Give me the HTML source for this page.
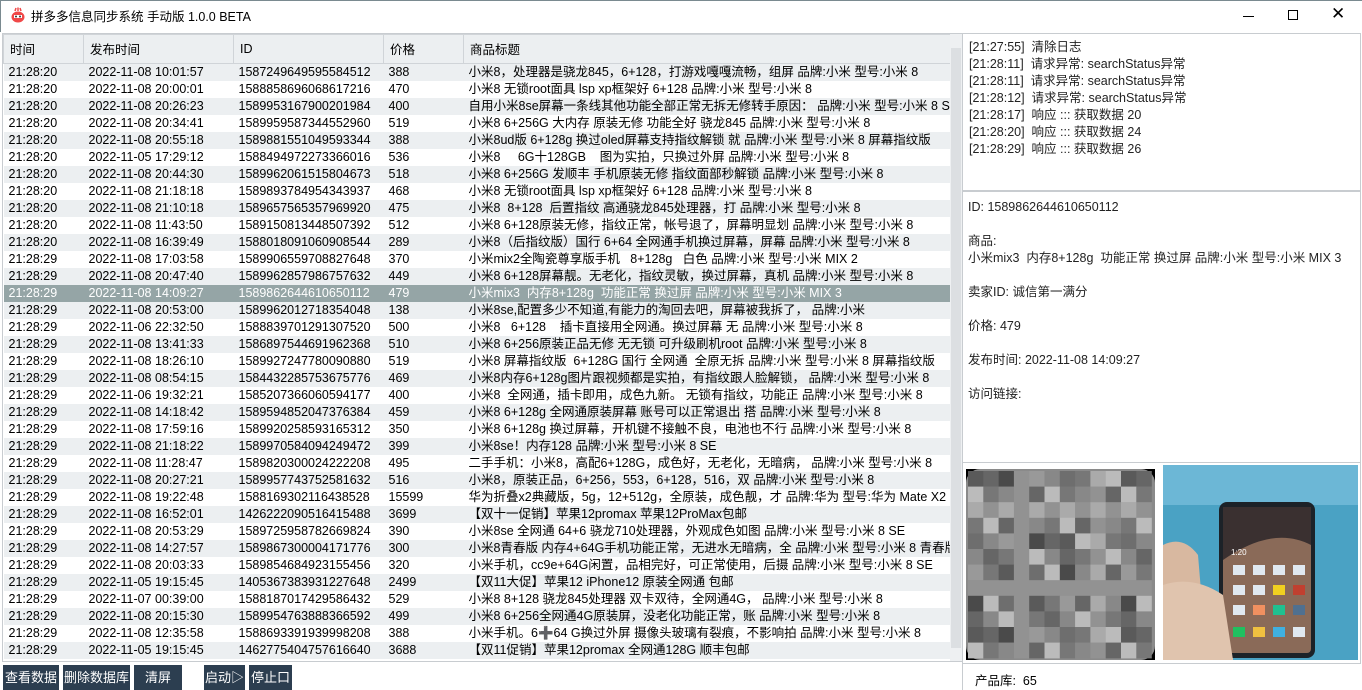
<!DOCTYPE html>
<html><head><meta charset="utf-8">
<style>
*{margin:0;padding:0;box-sizing:border-box}
body{width:1362px;height:690px;overflow:hidden;background:#fff;font-family:"Liberation Sans","Noto Sans CJK SC",sans-serif;font-size:12px;color:#000;position:relative}
.abs{position:absolute}
#title{left:0;top:0;width:1362px;height:32px;background:#fff;border-top:1px solid #7a8a90;border-left:1px solid #7a8a90}
#title .t{left:30px;top:5px;font-size:12.5px}
table{border-collapse:collapse;table-layout:fixed;position:absolute;left:3px;top:34px;width:947px}
th{height:29px;background:#eceff1;border:1px solid #d0d4d8;font-weight:normal;text-align:left;padding-left:6px;padding-bottom:1px;font-size:12.5px}
td{height:17px;line-height:17px;padding-left:5px;white-space:nowrap;overflow:hidden;font-size:12.5px}
tr:nth-child(even) td{background:#eceff1}
tr.sel td{background:#95a5a6!important;color:#fff}
.btn{position:absolute;top:665px;height:25px;background:#2c3e50;color:#fff;font-size:13px;line-height:25px;text-align:center}
.panel{border:1px solid #c8ccd0;position:absolute}
.log div{line-height:17px;font-size:12.5px;color:#222}
</style></head><body>
<div id="title" class="abs">
<svg class="abs" style="left:10px;top:6px" width="14" height="16" viewBox="0 0 14 16"><ellipse cx="7" cy="10" rx="6.5" ry="5.5" fill="#f04848"/><path d="M4 4 L5 1 M7 4 V0.5 M10 4 L9 1" stroke="#f04848" stroke-width="1.5"/><rect x="3" y="8" width="8" height="3" fill="#fff"/><circle cx="5" cy="9.5" r="1" fill="#333"/><circle cx="9" cy="9.5" r="1" fill="#333"/></svg>
<div class="abs t">拼多多信息同步系统 手动版 1.0.0 BETA</div>
<div class="abs" style="left:1242px;top:15px;width:11px;height:1px;background:#000"></div>
<div class="abs" style="left:1287px;top:9px;width:10px;height:10px;border:1px solid #000"></div>
<div class="abs" style="left:1330px;top:3px;font-size:17px">✕</div>
</div>
<div class="abs" style="left:2px;top:33px;width:960px;height:629px;border:1px solid #c8ccd0"></div>
<table>
<colgroup><col style="width:80px"><col style="width:150px"><col style="width:150px"><col style="width:80px"><col style="width:487px"></colgroup>
<tr><th>时间</th><th>发布时间</th><th>ID</th><th>价格</th><th>商品标题</th></tr>
<tr><td>21:28:20</td><td>2022-11-08 10:01:57</td><td>1587249649595584512</td><td>388</td><td>小米8，处理器是骁龙845，6+128，打游戏嘎嘎流畅，组屏 品牌:小米 型号:小米 8</td></tr>
<tr><td>21:28:20</td><td>2022-11-08 20:00:01</td><td>1588858696068617216</td><td>470</td><td>小米8 无锁root面具 lsp xp框架好 6+128 品牌:小米 型号:小米 8</td></tr>
<tr><td>21:28:20</td><td>2022-11-08 20:26:23</td><td>1589953167900201984</td><td>400</td><td>自用小米8se屏幕一条线其他功能全部正常无拆无修转手原因： 品牌:小米 型号:小米 8 SE</td></tr>
<tr><td>21:28:20</td><td>2022-11-08 20:34:41</td><td>1589959587344552960</td><td>519</td><td>小米8 6+256G 大内存 原装无修 功能全好 骁龙845 品牌:小米 型号:小米 8</td></tr>
<tr><td>21:28:20</td><td>2022-11-08 20:55:18</td><td>1589881551049593344</td><td>388</td><td>小米8ud版 6+128g 换过oled屏幕支持指纹解锁 就 品牌:小米 型号:小米 8 屏幕指纹版</td></tr>
<tr><td>21:28:20</td><td>2022-11-05 17:29:12</td><td>1588494972273366016</td><td>536</td><td>小米8&nbsp;&nbsp;&nbsp;&nbsp; 6G十128GB&nbsp;&nbsp;&nbsp; 图为实拍，只换过外屏 品牌:小米 型号:小米 8</td></tr>
<tr><td>21:28:20</td><td>2022-11-08 20:44:30</td><td>1589962061515804673</td><td>518</td><td>小米8 6+256G 发顺丰 手机原装无修 指纹面部秒解锁 品牌:小米 型号:小米 8</td></tr>
<tr><td>21:28:20</td><td>2022-11-08 21:18:18</td><td>1589893784954343937</td><td>468</td><td>小米8 无锁root面具 lsp xp框架好 6+128 品牌:小米 型号:小米 8</td></tr>
<tr><td>21:28:20</td><td>2022-11-08 21:10:18</td><td>1589657565357969920</td><td>475</td><td>小米8&nbsp; 8+128&nbsp; 后置指纹 高通骁龙845处理器，打 品牌:小米 型号:小米 8</td></tr>
<tr><td>21:28:20</td><td>2022-11-08 11:43:50</td><td>1589150813448507392</td><td>512</td><td>小米8 6+128原装无修，指纹正常，帐号退了，屏幕明显划 品牌:小米 型号:小米 8</td></tr>
<tr><td>21:28:20</td><td>2022-11-08 16:39:49</td><td>1588018091060908544</td><td>289</td><td>小米8（后指纹版）国行 6+64 全网通手机换过屏幕，屏幕 品牌:小米 型号:小米 8</td></tr>
<tr><td>21:28:29</td><td>2022-11-08 17:03:58</td><td>1589906559708827648</td><td>370</td><td>小米mix2全陶瓷尊享版手机&nbsp;&nbsp; 8+128g&nbsp;&nbsp; 白色 品牌:小米 型号:小米 MIX 2</td></tr>
<tr><td>21:28:29</td><td>2022-11-08 20:47:40</td><td>1589962857986757632</td><td>449</td><td>小米8 6+128屏幕靓。无老化，指纹灵敏，换过屏幕，真机 品牌:小米 型号:小米 8</td></tr>
<tr class="sel"><td>21:28:29</td><td>2022-11-08 14:09:27</td><td>1589862644610650112</td><td>479</td><td>小米mix3&nbsp; 内存8+128g&nbsp; 功能正常 换过屏 品牌:小米 型号:小米 MIX 3</td></tr>
<tr><td>21:28:29</td><td>2022-11-08 20:53:00</td><td>1589962012718354048</td><td>138</td><td>小米8se,配置多少不知道,有能力的淘回去吧，屏幕被我拆了， 品牌:小米</td></tr>
<tr><td>21:28:29</td><td>2022-11-06 22:32:50</td><td>1588839701291307520</td><td>500</td><td>小米8&nbsp;&nbsp; 6+128&nbsp;&nbsp;&nbsp; 插卡直接用全网通。换过屏幕 无 品牌:小米 型号:小米 8</td></tr>
<tr><td>21:28:29</td><td>2022-11-08 13:41:33</td><td>1586897544691962368</td><td>510</td><td>小米8 6+256原装正品无修 无无锁 可升级刷机root 品牌:小米 型号:小米 8</td></tr>
<tr><td>21:28:29</td><td>2022-11-08 18:26:10</td><td>1589927247780090880</td><td>519</td><td>小米8 屏幕指纹版&nbsp; 6+128G 国行 全网通&nbsp; 全原无拆 品牌:小米 型号:小米 8 屏幕指纹版</td></tr>
<tr><td>21:28:29</td><td>2022-11-08 08:54:15</td><td>1584432285753675776</td><td>469</td><td>小米8内存6+128g图片跟视频都是实拍，有指纹跟人脸解锁， 品牌:小米 型号:小米 8</td></tr>
<tr><td>21:28:29</td><td>2022-11-06 19:32:21</td><td>1585207366060594177</td><td>400</td><td>小米8&nbsp; 全网通，插卡即用，成色九新。 无锁有指纹，功能正 品牌:小米 型号:小米 8</td></tr>
<tr><td>21:28:29</td><td>2022-11-08 14:18:42</td><td>1589594852047376384</td><td>459</td><td>小米8 6+128g 全网通原装屏幕 账号可以正常退出 搭 品牌:小米 型号:小米 8</td></tr>
<tr><td>21:28:29</td><td>2022-11-08 17:59:16</td><td>1589920258593165312</td><td>350</td><td>小米8 6+128g 换过屏幕，开机键不接触不良，电池也不行 品牌:小米 型号:小米 8</td></tr>
<tr><td>21:28:29</td><td>2022-11-08 21:18:22</td><td>1589970584094249472</td><td>399</td><td>小米8se！内存128 品牌:小米 型号:小米 8 SE</td></tr>
<tr><td>21:28:29</td><td>2022-11-08 11:28:47</td><td>1589820300024222208</td><td>495</td><td>二手手机：小米8，高配6+128G，成色好，无老化，无暗病， 品牌:小米 型号:小米 8</td></tr>
<tr><td>21:28:29</td><td>2022-11-08 20:27:21</td><td>1589957743752581632</td><td>516</td><td>小米8，原装正品，6+256，553，6+128，516，双 品牌:小米 型号:小米 8</td></tr>
<tr><td>21:28:29</td><td>2022-11-08 19:22:48</td><td>1588169302116438528</td><td>15599</td><td>华为折叠x2典藏版，5g，12+512g，全原装，成色靓，才 品牌:华为 型号:华为 Mate X2 !</td></tr>
<tr><td>21:28:29</td><td>2022-11-08 16:52:01</td><td>1426222090516415488</td><td>3699</td><td>【双十一促销】苹果12promax 苹果12ProMax包邮</td></tr>
<tr><td>21:28:29</td><td>2022-11-08 20:53:29</td><td>1589725958782669824</td><td>390</td><td>小米8se 全网通 64+6 骁龙710处理器，外观成色如图 品牌:小米 型号:小米 8 SE</td></tr>
<tr><td>21:28:29</td><td>2022-11-08 14:27:57</td><td>1589867300004171776</td><td>300</td><td>小米8青春版 内存4+64G手机功能正常，无进水无暗病，全 品牌:小米 型号:小米 8 青春版</td></tr>
<tr><td>21:28:29</td><td>2022-11-08 20:03:33</td><td>1589854684923155456</td><td>320</td><td>小米手机，cc9e+64G闲置，品相完好，可正常使用，后摄 品牌:小米 型号:小米 8 SE</td></tr>
<tr><td>21:28:29</td><td>2022-11-05 19:15:45</td><td>1405367383931227648</td><td>2499</td><td>【双11大促】苹果12 iPhone12 原装全网通 包邮</td></tr>
<tr><td>21:28:29</td><td>2022-11-07 00:39:00</td><td>1588187017429586432</td><td>529</td><td>小米8 8+128 骁龙845处理器 双卡双待，全网通4G， 品牌:小米 型号:小米 8</td></tr>
<tr><td>21:28:29</td><td>2022-11-08 20:15:30</td><td>1589954763888366592</td><td>499</td><td>小米8 6+256全网通4G原装屏，没老化功能正常，账 品牌:小米 型号:小米 8</td></tr>
<tr><td>21:28:29</td><td>2022-11-08 12:35:58</td><td>1588693391939998208</td><td>388</td><td>小米手机。6➕64 G换过外屏 摄像头玻璃有裂痕，不影响拍 品牌:小米 型号:小米 8</td></tr>
<tr><td>21:28:29</td><td>2022-11-05 19:15:45</td><td>1462775404757616640</td><td>3688</td><td>【双11促销】苹果12promax 全网通128G 顺丰包邮</td></tr>
</table>
<div class="abs" style="left:950px;top:34px;width:12px;height:627px;background:#eef0f2"></div>
<div class="abs" style="left:951px;top:48px;width:10px;height:600px;background:#dcdfe2"></div>
<div class="btn" style="left:3px;width:56px">查看数据</div>
<div class="btn" style="left:63px;width:67px">删除数据库</div>
<div class="btn" style="left:134px;width:48px">清屏</div>
<div class="btn" style="left:204px;width:41px">启动▷</div>
<div class="btn" style="left:249px;width:43px">停止口</div>

<div class="panel log" style="left:962px;top:33px;width:399px;height:158px;padding:5px 0 0 6px">
<div>[21:27:55]&nbsp; 清除日志</div>
<div>[21:28:11]&nbsp; 请求异常: searchStatus异常</div>
<div>[21:28:11]&nbsp; 请求异常: searchStatus异常</div>
<div>[21:28:12]&nbsp; 请求异常: searchStatus异常</div>
<div>[21:28:17]&nbsp; 响应 ::: 获取数据 20</div>
<div>[21:28:20]&nbsp; 响应 ::: 获取数据 24</div>
<div>[21:28:29]&nbsp; 响应 ::: 获取数据 26</div>
</div>
<div class="panel" style="left:962px;top:191px;width:399px;height:272px;padding:7px 0 0 5px;font-size:12.5px;line-height:17px;color:#222">
<div>ID: 1589862644610650112</div><br>
<div>商品:</div>
<div>小米mix3&nbsp; 内存8+128g&nbsp; 功能正常 换过屏 品牌:小米 型号:小米 MIX 3</div><br>
<div>卖家ID: 诚信第一满分</div><br>
<div>价格: 479</div><br>
<div>发布时间: 2022-11-08 14:09:27</div><br>
<div>访问链接:</div>
</div>
<div class="panel" style="left:962px;top:462px;width:399px;height:202px"></div>
<div class="abs" style="left:966px;top:469px;width:189px;height:191px;background:#000"></div>
<svg class="abs" style="left:966px;top:469px" width="189" height="191">
<rect x="0" y="0" width="189" height="191" rx="14" fill="#8a8a8a"/>
<g id="px"></g>
</svg>
<svg class="abs" style="left:1163px;top:465px" width="195" height="195">
<rect width="195" height="195" fill="#4aa2c4"/>
<rect width="195" height="40" fill="#6cb7d6"/>
<path d="M0 80 Q20 70 35 90 L40 150 Q60 120 70 140 L70 195 L0 195Z" fill="#d8b8a0"/>
<rect x="56" y="37" width="96" height="156" rx="8" fill="#1c2228"/>
<rect x="60" y="42" width="88" height="146" rx="4" fill="#8a6a58"/>
<path d="M60 42 H148 V80 Q110 60 60 95Z" fill="#3a3030"/>
<g fill="#e0e8f0"><rect x="70" y="100" width="12" height="10"/><rect x="90" y="100" width="12" height="10"/><rect x="110" y="100" width="12" height="10"/><rect x="130" y="100" width="12" height="10"/><rect x="70" y="120" width="12" height="10"/><rect x="90" y="120" width="12" height="10"/><rect x="110" y="120" width="12" height="10" fill="#f0d020"/><rect x="130" y="120" width="12" height="10" fill="#c04030"/><rect x="70" y="140" width="12" height="10"/><rect x="90" y="140" width="12" height="10" fill="#f09060"/><rect x="110" y="140" width="12" height="10" fill="#20c090"/><rect x="130" y="140" width="12" height="10" fill="#507090"/><rect x="70" y="162" width="12" height="10" fill="#20c060"/><rect x="90" y="162" width="12" height="10" fill="#f0c040"/><rect x="110" y="162" width="12" height="10" fill="#40b0e0"/><rect x="130" y="162" width="12" height="10"/></g>
<text x="68" y="90" fill="#fff" font-size="8" font-family="Liberation Sans">1:20</text>
<path d="M0 120 Q30 110 60 130 L70 195 L0 195Z" fill="#e0c4ae"/>
</svg>
<div class="abs" style="left:962px;top:663px;width:399px;height:27px;border-left:1px solid #c8ccd0"></div>
<div class="abs" style="left:975px;top:670px;font-size:12.5px">产品库:&nbsp; 65</div>
<script>
var g=document.getElementById('px'),s='',c=['#5a5a5a','#777','#999','#666','#aaa','#888','#4a4a4a','#bbb','#6e6e6e','#929292'];
for(var i=0;i<12;i++)for(var j=0;j<12;j++){s+='<rect x="'+(2+j*15.3)+'" y="'+(2+i*15.6)+'" width="15.5" height="15.8" fill="'+c[(i*7+j*3+i*j)%10]+'"/>';}
g.innerHTML=s;
</script>
</body></html>
